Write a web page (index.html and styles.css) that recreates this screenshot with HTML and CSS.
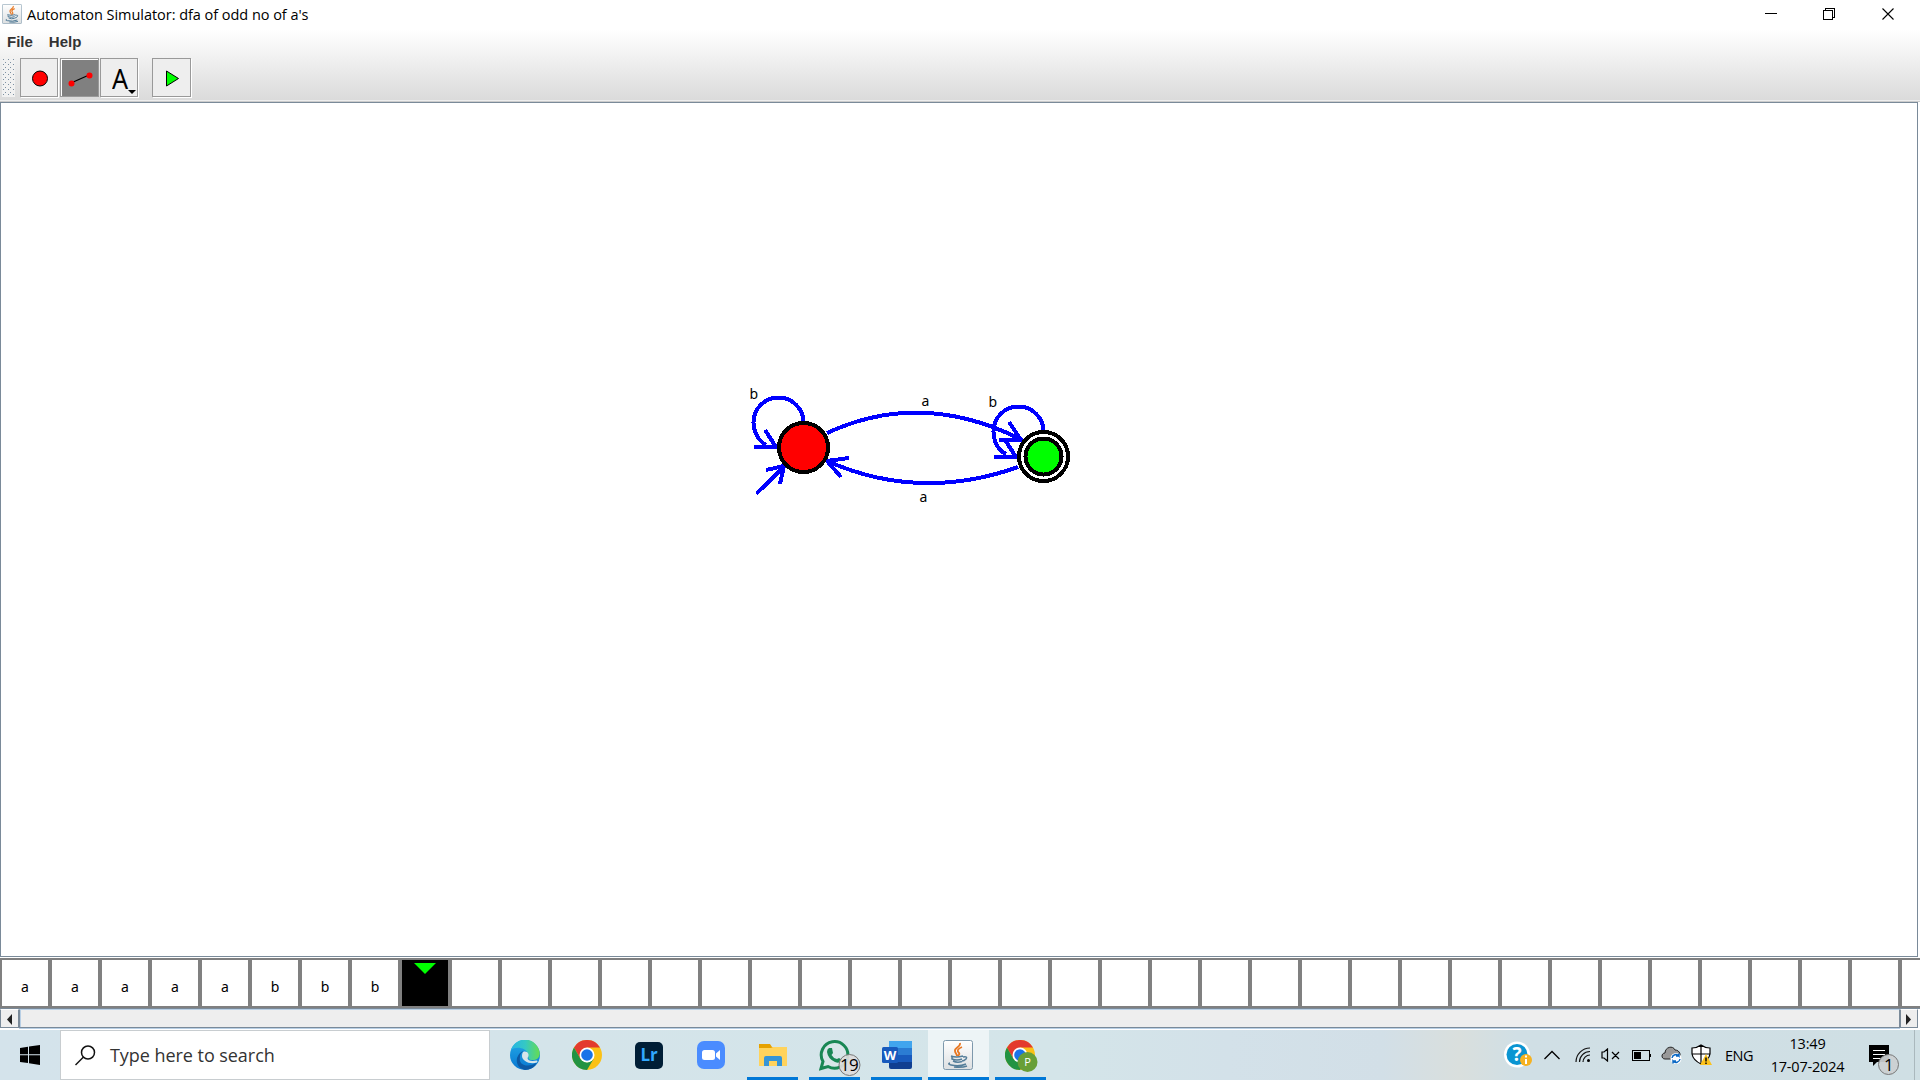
FILE: index.html
```
<!DOCTYPE html>
<html lang="en">
<head>
<meta charset="utf-8">
<title>Automaton Simulator</title>
<link rel="stylesheet" href="styles.css">
</head>
<body>
<header class="titlebar">
  <svg class="app-icon" width="20" height="20" viewBox="0 0 30 30"><use href="#java"/></svg>
  <span class="title">Automaton Simulator: dfa of odd no of a's</span>
  <div class="window-buttons">
    <svg width="12" height="14" shape-rendering="crispEdges"><path d="M0 6.500H12" stroke="#000"/></svg>
    <svg width="12" height="14" shape-rendering="crispEdges" fill="none" stroke="#000"><path d="M.5 3.500H9.500V12.500H.5ZM2.500 3V1.500H11.500V10.500H10"/></svg>
    <svg width="12" height="14"><path d="M.5 1.500L11.500 12.500M11.500 1.500L.5 12.500" stroke="#000" stroke-width="1.100"/></svg>
  </div>
</header>
<div class="chrome">
  <nav class="menu"><span>File</span><span>Help</span></nav>
  <div class="toolbar">
    <div class="grip"></div>
    <div class="tool"><svg width="36" height="37"><circle cx="19" cy="19.500" r="7.500" fill="red" stroke="#000"/></svg></div>
    <div class="tool selected"><svg width="36" height="37"><path d="M10 24L28 16" stroke="#000" stroke-width="1.200"/><circle cx="10.500" cy="24.500" r="3" fill="red"/><circle cx="28.500" cy="16.500" r="3" fill="red"/></svg></div>
    <div class="tool letter"><span>A</span><svg class="caret" width="8" height="4"><path d="M0 0H8L4 4Z"/></svg></div>
    <div class="tool run"><svg width="37" height="37"><path d="M13.500 12L25.500 19.500L13.500 27Z" fill="#0f0" stroke="#000"/></svg></div>
  </div>
</div>
<main class="canvas">
  <svg class="automaton" width="340" height="140" shape-rendering="crispEdges" fill="none" stroke="#00f" stroke-width="4">
    <path d="M63.500 42.500A25 25 0 0 0 13.500 42.500Q14 58 26 65M14 67H36L25 50"/>
    <path d="M87 53Q182 9 282 60M269 42L281 60H259"/>
    <path d="M278 87Q180 122 87 81M109 78L87 81L101 97"/>
    <path d="M303.500 51.500A25 25 0 0 0 253.500 51.500Q254 68 266 74M254 77H276L265 60"/>
    <path d="M16.500 113.500L44 87M26 90L44 86L40 104"/>
    <circle cx="63.500" cy="67.500" r="24.500" fill="red" stroke="#000"/>
    <circle cx="303.500" cy="76.500" r="24.500" fill="#fff" stroke="#000"/>
    <circle cx="303.500" cy="76.500" r="18" fill="#0f0" stroke="#000"/>
    <g class="edge-labels"><text x="9.500" y="19">b</text><text x="181.500" y="26">a</text><text x="248.500" y="27">b</text><text x="179.500" y="122">a</text></g>
  </svg>
</main>
<section class="tape">
  <div>a</div><div>a</div><div>a</div><div>a</div><div>a</div><div>b</div><div>b</div><div>b</div>
  <div class="head"><svg width="22" height="11"><path d="M0 0H22L11 11Z" fill="#0f0"/></svg></div>
  <div></div><div></div><div></div><div></div><div></div><div></div><div></div><div></div><div></div><div></div>
  <div></div><div></div><div></div><div></div><div></div><div></div><div></div><div></div><div></div><div></div>
  <div></div><div></div><div></div><div></div><div></div><div></div><div></div><div></div><div></div><div></div>
</section>
<div class="scrollbar">
  <div class="arrow left"><svg width="16" height="16"><path d="M10 3V14L5 8.500Z" fill="#222"/></svg></div>
  <div class="thumb"></div>
  <div class="arrow right"><svg width="16" height="16"><path d="M5 3V14L10 8.500Z" fill="#222"/></svg></div>
</div>
<footer class="taskbar">
  <div class="start"><svg width="20" height="20"><path d="M0 3L8 1.800V9.300H0ZM9 1.600L20 0V9.300H9ZM0 10.300H8V18L0 17ZM9 10.300H20V20L9 18.300Z"/></svg></div>
  <div class="search"><svg width="21" height="21" fill="none" stroke="#111" stroke-width="1.500"><circle cx="13" cy="7.500" r="6.500"/><path d="M8.500 12L.5 20"/></svg><span>Type here to search</span></div>
  <div class="apps">
    <div class="app"><svg width="30" height="30" viewBox="0 0 30 30"><circle cx="15" cy="15" r="15" fill="url(#edgeBlue)"/><path d="M1 10C5-2 20-4 27 6C33 15 28 21 21 20C17 19 19 17 18 14C16 7 5 6 1 10Z" fill="url(#edgeGreen)"/><path d="M10 17C8 26 19 28 27 22.500Q23 30 15 30C8 28 6 23 7 18Q9 12 14 11Q10 13 10 17Z" fill="#0c59a4"/><path d="M14 11.500C18 11 20 15 17.500 18Q18 22 27 20.500Q28 21 27 22.500C20 25 12 21 12 16Q12 12 14 11.500Z" fill="#d6e5ea"/></svg></div>
    <div class="app"><svg width="30" height="30" viewBox="0 0 30 30"><use href="#chrome"/></svg></div>
    <div class="app"><svg width="28" height="27"><rect width="28" height="27" rx="5" fill="#001e36"/><text x="5.500" y="19" class="lr">Lr</text></svg></div>
    <div class="app"><svg width="28" height="28"><rect width="28" height="28" rx="7" fill="#4a8cff"/><rect x="5" y="9" width="13" height="10" rx="2.500" fill="#fff"/><path d="M19 12.500L23 9V19L19 15.500Z" fill="#fff"/></svg></div>
    <div class="app open"><svg width="28" height="24"><path d="M0 1H11L13 4H26V9H0Z" fill="#e6a100"/><path d="M0 5H12L14 4H28V23H0Z" fill="#ffd35c"/><path d="M5 23V15Q5 13 7 13H21Q23 13 23 15V23H18V18H10V23Z" fill="#3595d7"/></svg></div>
    <div class="app open"><svg class="whatsapp" width="42" height="36"><path d="M2 28.500L4 21.500A13.300 13.300 0 1 1 9 26.500Z" fill="#d8e6e9" stroke="#198754" stroke-width="3"/><path d="M10 8L13 8L14 13L12.500 15Q14 18 18 19L20 18L23 20Q21 24 16 22Q9 19 8 12Q8 9 10 8Z" fill="#198754"/><circle cx="30.500" cy="25" r="10.500" fill="#ddd" fill-opacity=".93" stroke="#777"/><text x="30" y="31" class="badge">19</text></svg></div>
    <div class="app open"><svg width="30" height="28"><rect x="7" width="23" height="28" rx="2" fill="#103f91"/><path d="M7 0H30V7H7Z" fill="#41a5ee"/><path d="M7 7H30V14H7Z" fill="#2b7cd3"/><path d="M7 14H30V21H7Z" fill="#185abd"/><rect y="6" width="16" height="16" rx="1.500" fill="#185abd"/><text x="8" y="18.500" class="word">W</text></svg></div>
    <div class="app open active"><svg width="30" height="30" viewBox="0 0 30 30"><use href="#java"/></svg></div>
    <div class="app open"><svg class="profile" width="33" height="32"><use href="#chrome"/><circle cx="22.500" cy="22" r="10" fill="#689f38"/><text x="22.500" y="26" class="initial">P</text></svg></div>
  </div>
  <div class="tray">
    <svg class="help" width="30" height="28"><circle cx="13" cy="13.500" r="13" fill="#fff"/><circle cx="13" cy="13.500" r="10.500" fill="#0a95d2"/><text x="13" y="20" class="question">?</text><circle cx="22" cy="19" r="6" fill="#f6b221"/><path d="M22 18V23M22 14.500V16.500" stroke="#fff" stroke-width="2"/></svg>
    <svg class="chevron" width="16" height="10"><path d="M.5 9L8 1.500L15.500 9" fill="none" stroke="#000" stroke-width="1.300"/></svg>
    <svg class="wifi" width="16" height="16" fill="none" stroke="#111" stroke-width="1.200"><path d="M1 15A14 14 0 0 1 15 1M4.500 15A10.500 10.500 0 0 1 15 4.500M8 15A7 7 0 0 1 15 8"/><circle cx="13.500" cy="13.500" r="1.500" fill="#000" stroke="none"/></svg>
    <svg class="sound" width="19" height="14" fill="none" stroke="#000" stroke-width="1.200"><path d="M1 4H3L6.500 1V13L3 10H1ZM11 4L18 11M18 4L11 11"/></svg>
    <svg class="battery" width="20" height="11" shape-rendering="crispEdges"><path d="M.5 .5H17.500V10.500H.5ZM18.500 4V7" fill="none" stroke="#000"/><path d="M2 2H9V9H2Z"/></svg>
    <svg class="cloud" width="21" height="18"><path d="M4 13C0 13 0 7 4 7C4 1 12-1 14 4C19 4 21 10 17 13Z" fill="#999" stroke="#222"/><circle cx="15" cy="12.500" r="5.500" fill="#fff"/><path d="M11 12A4 4 0 0 1 18 10V7.500M18 10H15M19 13A4 4 0 0 1 12 15V17.500M12 15H15" fill="none" stroke="#0867c4" stroke-width="1.400"/></svg>
    <svg class="shield" width="21" height="22"><path d="M10 1Q14 4 19 4V10Q18 16 10 20Q2 16 1 10V4Q6 4 10 1ZM10 1V20M1 10H19" fill="#fff" stroke="#000" stroke-width="1.200"/><path d="M15 10L21 21H9Z" fill="#fcc21b"/><path d="M15 13.500V17.500M15 18.500V20" stroke="#000" stroke-width="1.400"/></svg>
    <span class="lang">ENG</span>
    <div class="clock"><span>13:49</span><span>17-07-2024</span></div>
    <svg class="notice" width="31" height="31"><path d="M0 0H20V17H8L4 21V17H0Z"/><path d="M4 5.500H16M4 9.500H16M4 13.500H12" stroke="#fff"/><circle cx="19.500" cy="19.500" r="10" fill="#cbd0d2" fill-opacity=".93" stroke="#777"/><text x="19.500" y="25.500" class="badge">1</text></svg>
    <div class="desktop-edge"></div>
  </div>
</footer>
<svg class="symbols" width="0" height="0">
  <defs>
    <linearGradient id="edgeBlue" x2="0" y2="1"><stop stop-color="#24a9e6"/><stop offset="1" stop-color="#0877d1"/></linearGradient>
    <linearGradient id="edgeGreen"><stop stop-color="#27b5e4"/><stop offset=".5" stop-color="#35c8c4"/><stop offset="1" stop-color="#66dc50"/></linearGradient>
    <linearGradient id="tile" x2="0" y2="1"><stop stop-color="#fff"/><stop offset="1" stop-color="#dcdfe1"/></linearGradient>
    <symbol id="chrome" viewBox="0 0 30 30" width="30" height="30"><circle cx="15" cy="15" r="15" fill="#fbc116"/><path d="M2 7.500A15 15 0 0 1 28 7.500H15L8.500 19Z" fill="#e33b2e"/><path d="M2 7.500L8.500 19L15 22.500L21.500 19L15 30A15 15 0 0 1 2 7.500Z" fill="#229342"/><circle cx="15" cy="15" r="7.500" fill="#fff"/><circle cx="15" cy="15" r="5.800" fill="#1a73e8"/></symbol>
    <symbol id="java" viewBox="0 0 30 30"><rect x=".5" y=".5" width="29" height="29" rx="2" fill="url(#tile)" stroke="#7d98ac"/><path d="M17 3C18 7 11 8 12 11C12 13 14 14 14 16M19 7C14 9 14 11 16 13Q17 14 15 16" fill="none" stroke="#e87722" stroke-width="1.800"/><path d="M8 16Q13 18 20 16M9 17V19Q14 21 19 19M20 17Q25 16 23 19Q21 21 19 21M10 21Q14 23 19 21.500M7 23Q4 24 8 25Q16 27 23 24M11 27Q19 28 24 26" fill="none" stroke="#547d99" stroke-width="1.500"/></symbol>
  </defs>
</svg>
</body>
</html>
```
FILE: styles.css
```
* { box-sizing: border-box; }
body { margin: 0; width: 1920px; height: 1080px; overflow: hidden; background: #fff; color: #000; font-family: "Open Sans", "Noto Sans", sans-serif; display: flex; flex-direction: column; }
svg { display: block; flex: none; }
.symbols { position: absolute; }
.titlebar { height: 30px; flex: none; display: flex; align-items: center; padding: 0 26px 2px 2px; }
.title { margin: 2px 0 0 5px; font-size: 14.5px; letter-spacing: -.04px; line-height: 28px; white-space: nowrap; }
.window-buttons { margin-left: auto; display: flex; gap: 47px; }
.window-buttons svg:first-child { margin-right: -1px; }
.chrome { height: 72px; flex: none; background: linear-gradient(#fff, #dadada); border-bottom: 1px solid #ccc; box-shadow: inset 0 -1px #eee; }
.menu { display: flex; gap: 16px; height: 28px; padding: 2px 7px; font: bold 15px/19px "Liberation Sans", sans-serif; color: #333; }
.toolbar { display: flex; height: 40px; padding-left: 2px; }
.grip { width: 13px; height: 39px; margin-right: 5px; background-color: #f1f1f1; background-image: radial-gradient(circle at 1.5px 1.5px, #7d90a2 .8px, transparent 1px), radial-gradient(circle at 3.5px 4.5px, #7d90a2 .8px, transparent 1px); background-size: 5px 5px; }
.tool { position: relative; width: 38px; height: 39px; margin-right: 2px; background: #eee; border: 1px solid #999; box-shadow: 1px 1px #fff; }
.tool.selected { width: 39px; background: #808080; box-shadow: inset 1px 1px #fff; margin-right: 1px; }
.letter { font: 28px/38px "Noto Sans", sans-serif; padding-left: 11px; }
.letter span { display: block; width: 16px; transform: scaleX(.9); transform-origin: left; }
.caret { position: absolute; right: 1px; bottom: 2px; }
.run { width: 39px; margin-left: 12px; }
.canvas { height: 855px; width: 1918px; flex: none; border: 1px solid #7a8a99; padding: 277px 0 0 739px; }
.edge-labels { fill: #000; stroke: none; font: 14px "Noto Sans", sans-serif; }
.tape { height: 50px; flex: none; margin-top: 1px; padding: 2px; display: flex; gap: 4px; overflow: hidden; background: #808080; font: 14px/53px "Noto Sans", sans-serif; text-align: center; }
.tape div { width: 46px; height: 46px; flex: none; background: #fff; }
.tape .head { background: #000; padding: 3px 12px; }
.scrollbar { height: 22px; flex: none; display: flex; padding-right: 2px; border-top: 1px solid #7a8a99; }
.arrow { width: 18px; height: 19px; background: #eee; border: 1px solid #7a8a99; border-top-color: #fff; }
.arrow svg { margin-top: 1px; }
.arrow.left { width: 19px; padding-left: 1px; }
.thumb { flex: 1; height: 19px; background: #eee; border: 1px solid #7a8a99; border-top-color: #b8cfe5; box-shadow: inset 1px 0 #b8cfe5, 0 1px #b8cfe5; }
.taskbar { height: 50px; flex: none; display: flex; background: linear-gradient(90deg, #d4e3eb, #d4e5e9 55%, #d3e1e9 64%, #d2dfe7 72%, #d9dfdd 76%, #d0dfe5 79%, #cfdfe4); }
.start { width: 60px; padding: 15px 20px; }
.search { width: 430px; height: 50px; background: #fff; border: 1px solid #c8cdd0; display: flex; padding: 14px 14px; }
.search span { font-size: 18px; line-height: 20px; margin-left: 14px; color: #333; letter-spacing: -.05px; }
.apps { display: flex; margin-left: 4px; }
.app { position: relative; width: 62px; display: flex; align-items: center; justify-content: center; }
.app svg { margin-left: -1px; }
.open::after { content: ""; position: absolute; left: 5px; right: 6px; bottom: 0; height: 3px; background: #0078d7; }
.active { width: 61px; margin-right: 1px; background: #edf4f6; }
.active::after { left: 0; right: 0; }
.app .whatsapp { margin: 5px 0 0 10px; }
.app .profile { margin: 2px 0 0 1px; }
.lr { fill: #31a8ff; font: bold 17px "Open Sans", sans-serif; }
.word { fill: #fff; font: bold 13px "Open Sans", sans-serif; text-anchor: middle; }
.badge { font: 17px "Open Sans", sans-serif; letter-spacing: -.8px; text-anchor: middle; }
.initial { fill: #fff; font: 11px "Open Sans", sans-serif; text-anchor: middle; }
.question { fill: #fff; font: bold 19px "Open Sans", sans-serif; text-anchor: middle; }
.tray { margin-left: auto; display: flex; align-items: center; height: 50px; }
.chevron { margin-left: 10px; }
.wifi { margin-left: 15px; }
.sound { margin-left: 10px; }
.battery { margin-left: 12px; }
.cloud { margin-left: 9px; }
.shield { margin-left: 9px; }
.lang { margin-left: 13px; width: 29px; font-size: 14.5px; letter-spacing: -.5px; }
.clock { width: 77px; margin-left: 15px; font-size: 14.5px; letter-spacing: -.2px; line-height: 23px; display: flex; flex-direction: column; align-items: center; white-space: nowrap; }
.notice { margin: 10px 0 0 23px; }
.desktop-edge { width: 6px; height: 50px; margin-left: 14px; border-left: 1px solid #aab8bd; }
```
